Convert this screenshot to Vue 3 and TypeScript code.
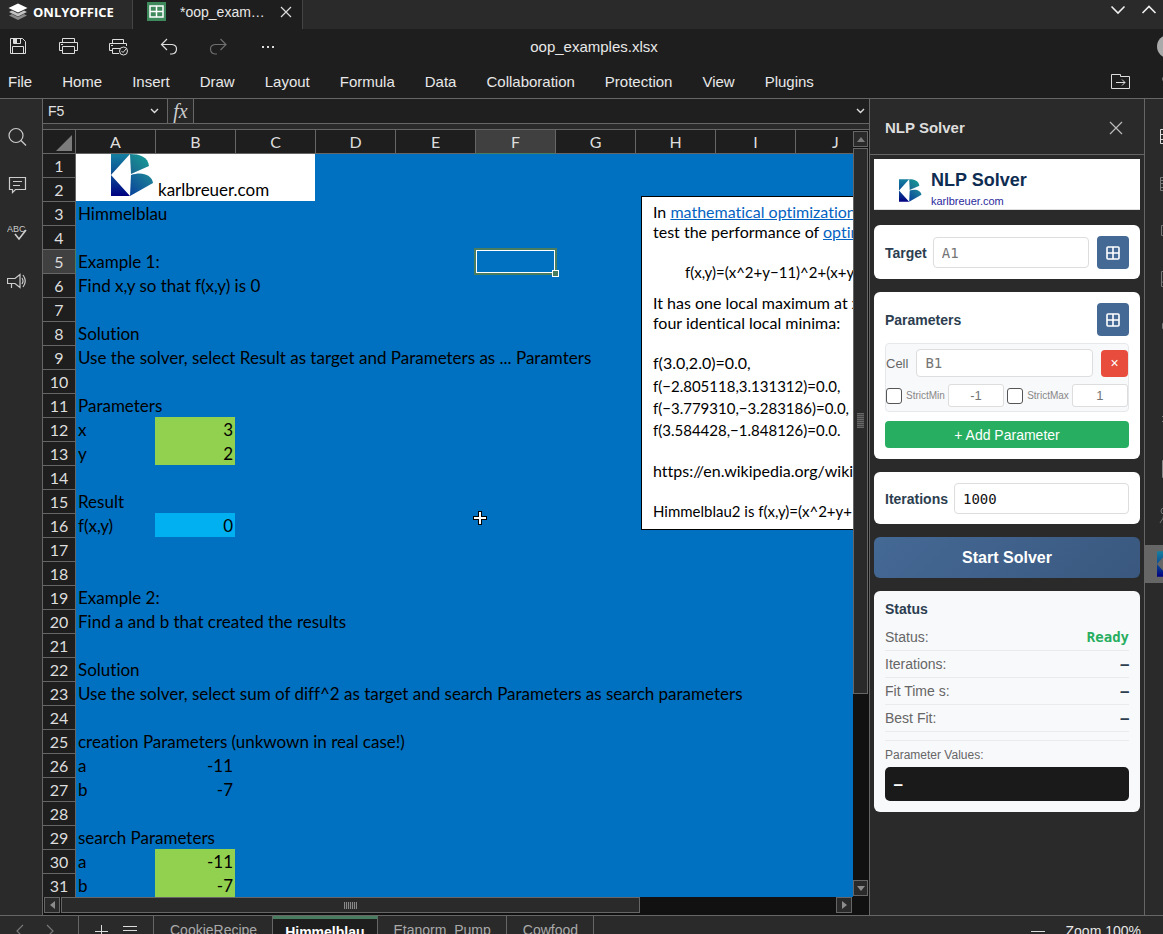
<script setup lang="ts">
import { ref } from 'vue'

interface Cell {
  text?: string
  num?: boolean
  fill?: 'green' | 'cyan' | 'white'
}

const menus = ['File', 'Home', 'Insert', 'Draw', 'Layout', 'Formula', 'Data', 'Collaboration', 'Protection', 'View', 'Plugins']
const columns = ['A', 'B', 'C', 'D', 'E', 'F', 'G', 'H', 'I', 'J']
const rows = Array.from({ length: 31 }, (_, i) => i + 1)
const activeColumn = 'F'
const activeRow = 5

const cells: Record<string, Cell> = {
  A1: { fill: 'white' }, B1: { fill: 'white' }, C1: { fill: 'white' },
  A2: { fill: 'white' }, B2: { text: 'karlbreuer.com', fill: 'white' }, C2: { fill: 'white' },
  A3: { text: 'Himmelblau' },
  A5: { text: 'Example 1:' },
  A6: { text: 'Find x,y so that f(x,y) is 0' },
  A8: { text: 'Solution' },
  A9: { text: 'Use the solver, select Result as target and Parameters as ... Paramters' },
  A11: { text: 'Parameters' },
  A12: { text: 'x' }, B12: { text: '3', num: true, fill: 'green' },
  A13: { text: 'y' }, B13: { text: '2', num: true, fill: 'green' },
  A15: { text: 'Result' },
  A16: { text: 'f(x,y)' }, B16: { text: '0', num: true, fill: 'cyan' },
  A19: { text: 'Example 2:' },
  A20: { text: 'Find a and b that created the results' },
  A22: { text: 'Solution' },
  A23: { text: 'Use the solver, select sum of diff^2 as target and search Parameters as search parameters' },
  A25: { text: 'creation Parameters (unkwown in real case!)' },
  A26: { text: 'a' }, B26: { text: '-11', num: true },
  A27: { text: 'b' }, B27: { text: '-7', num: true },
  A29: { text: 'search Parameters' },
  A30: { text: 'a' }, B30: { text: '-11', num: true, fill: 'green' },
  A31: { text: 'b' }, B31: { text: '-7', num: true, fill: 'green' },
}

function cellClass(column: string, row: number): string[] {
  const cell = cells[column + row]
  const list: string[] = []
  if (cell?.num) list.push('num')
  if (cell?.fill) list.push(cell.fill)
  return list
}

const sheets = ['CookieRecipe', 'Himmelblau', 'Etanorm_Pump', 'Cowfood']
const activeSheet = ref('Himmelblau')

const target = ref('')
const paramCell = ref('')
const strictMin = ref(false)
const strictMax = ref(false)
const minValue = ref('')
const maxValue = ref('')
const iterations = ref('1000')

const results = [
  { label: 'Status:', value: 'Ready', ready: true },
  { label: 'Iterations:', value: '–', ready: false },
  { label: 'Fit Time s:', value: '–', ready: false },
  { label: 'Best Fit:', value: '–', ready: false },
]
</script>

<template>
  <div class="app">
    <svg class="defs" width="0" height="0" aria-hidden="true">
      <defs>
        <linearGradient id="kbLeft" x1="0" y1="0" x2="0" y2="1">
          <stop offset="0" stop-color="#1580a0" />
          <stop offset="0.5" stop-color="#0b4c94" />
          <stop offset="1" stop-color="#000080" />
        </linearGradient>
        <linearGradient id="kbTop" x1="0" y1="1" x2="1" y2="0">
          <stop offset="0" stop-color="#1d6590" />
          <stop offset="1" stop-color="#12a096" />
        </linearGradient>
        <linearGradient id="kbBottom" x1="0" y1="1" x2="1" y2="0">
          <stop offset="0" stop-color="#08409a" />
          <stop offset="1" stop-color="#1f8a98" />
        </linearGradient>
        <symbol id="kb" viewBox="0 0 43 42">
          <path d="M0 0H19L0 21Z M0 21L19 42H0Z" fill="url(#kbLeft)" />
          <path d="M19 0C29 0 37 3 38 12L20 20Z" fill="url(#kbTop)" />
          <path d="M20 21C31 17 41 21 42 29L19 42Z" fill="url(#kbBottom)" />
        </symbol>
        <symbol id="grid" viewBox="0 0 14 14">
          <rect x="1" y="1" width="12" height="12" rx="1" fill="none" stroke="currentColor" stroke-width="1.6" />
          <path d="M7 1V13M1 7H13" stroke="currentColor" stroke-width="1.6" />
        </symbol>
      </defs>
    </svg>

    <header class="titlebar">
      <div class="brand">
        <svg width="20" height="18" viewBox="0 0 20 18">
          <path d="M1 12.5L10 17L19 12.5L16 11L10 14L4 11Z" fill="#8a8a8a" />
          <path d="M1 9L10 13.5L19 9L16 7.5L10 10.5L4 7.5Z" fill="#c4c4c4" />
          <path d="M10 0.500L19.500 5L10 9.500L0.500 5Z" fill="#fff" />
        </svg>
        <span>ONLYOFFICE</span>
      </div>
      <div class="doc-tab">
        <svg width="19" height="19" viewBox="0 0 19 19">
          <rect width="19" height="19" fill="#3f8a5c" />
          <rect x="3" y="4" width="13" height="11" fill="none" stroke="#fff" stroke-width="1.5" />
          <path d="M9.500 4V15M3 9.500H16" stroke="#fff" stroke-width="1.5" />
        </svg>
        <span>*oop_exam…</span>
        <button class="plain" aria-label="Close document">
          <svg width="12" height="12" viewBox="0 0 12 12"><path d="M1 1L11 11M11 1L1 11" stroke="#ddd" stroke-width="1.200" /></svg>
        </button>
      </div>
      <div class="window-buttons">
        <button class="plain" aria-label="Minimize"><svg width="16" height="10" viewBox="0 0 16 10"><path d="M1.500 1.500L8 8L14.500 1.500" fill="none" stroke="#eee" stroke-width="1.600" /></svg></button>
        <button class="plain" aria-label="Maximize"><svg width="16" height="10" viewBox="0 0 16 10"><path d="M1.500 8L8 1.500L14.500 8" fill="none" stroke="#eee" stroke-width="1.600" /></svg></button>
      </div>
    </header>

    <div class="quickbar">
      <div class="quick-actions">
        <button class="plain" aria-label="Save">
          <svg width="20" height="20" viewBox="0 0 20 20" fill="none" stroke="#ddd">
            <path d="M2.500 1.500H14.500L17.500 4.500V16.500H2.500Z M4.500 16.500V9.500H15.500V16.500" />
            <path d="M5.500 1.500V6.500H12.500V1.500" /><path d="M6 2H9V6H6Z" fill="#ddd" stroke="none" />
          </svg>
        </button>
        <button class="plain" aria-label="Print">
          <svg width="20" height="20" viewBox="0 0 20 20" fill="none" stroke="#ddd">
            <path d="M4.500 5.500V1.500H16.500V5.500M4.500 13.500H1.500V5.500H19.500V13.500H16.500M4.500 9.500H16.500V16.500H4.500Z M3 7.500H5" />
          </svg>
        </button>
        <button class="plain" aria-label="Quick print">
          <svg width="20" height="20" viewBox="0 0 20 20" fill="none" stroke="#ddd">
            <path d="M4.500 6.500V2.500H15.500V6.500M4.500 13.500H1.500V6.500H18.500V9M11 16.500H4.500V11.500H12M3 8.500H5" />
            <circle cx="15.500" cy="14" r="4" /><path d="M13.500 14L15 15.500L18 12" />
          </svg>
        </button>
        <button class="plain" aria-label="Undo">
          <svg width="20" height="20" viewBox="0 0 20 20" fill="none" stroke="#ddd" stroke-width="1.200">
            <path d="M9 2L3.500 7.500L9 13M3.500 7.500H14Q18.500 8 18.500 12Q18.500 16.500 14 17H12" />
          </svg>
        </button>
        <button class="plain" aria-label="Redo">
          <svg width="20" height="20" viewBox="0 0 20 20" fill="none" stroke="#6e6e6e" stroke-width="1.200">
            <path d="M12.500 2L18 7.500L12.500 13M18 7.500H7Q2.500 8 2.500 12Q2.500 16.500 7 17H9" />
          </svg>
        </button>
        <button class="plain" aria-label="More">
          <svg width="20" height="20" viewBox="0 0 20 20" fill="#ddd"><path d="M4 9H6V11H4ZM9 9H11V11H9ZM14 9H16V11H14Z" /></svg>
        </button>
      </div>
      <div class="doc-title">oop_examples.xlsx</div>
      <div class="avatar"></div>
    </div>

    <nav class="menubar">
      <button v-for="m in menus" :key="m" class="plain">{{ m }}</button>
      <div class="menu-tools">
        <button class="plain" aria-label="Open file location">
          <svg width="20" height="16" viewBox="0 0 20 16" fill="none" stroke="#ddd">
            <path d="M1.500 1.500H10.500V3.500H19.500V15.500H1.500Z M6 9.500H15M12 6.500L15 9.500L12 12.500" />
          </svg>
        </button>
        <button class="plain" aria-label="Search">
          <svg width="20" height="20" viewBox="0 0 20 20" fill="none" stroke="#ddd"><circle cx="8" cy="8" r="6" /><path d="M12 12L18 18" /></svg>
        </button>
      </div>
    </nav>

    <main class="workspace">
      <aside class="left-bar">
        <button class="plain" aria-label="Search">
          <svg width="20" height="20" viewBox="0 0 20 20" fill="none" stroke="#ccc" stroke-width="1.200"><circle cx="9" cy="8.500" r="7" /><path d="M14 13.500L19 18.500" /></svg>
        </button>
        <button class="plain" aria-label="Comments">
          <svg width="20" height="20" viewBox="0 0 20 20" fill="none" stroke="#ccc" stroke-width="1.200">
            <path d="M2.500 2.500H18.500V14.500H8.500L5.500 17.500V14.500H2.500Z M6 6.500H15M6 10.500H13" />
          </svg>
        </button>
        <button class="plain" aria-label="Spell check">
          <svg width="20" height="20" viewBox="0 0 20 20">
            <text class="abc" x="0" y="9">ABC</text>
            <path d="M8 11L12 16L19 7" fill="none" stroke="#ccc" stroke-width="1.600" />
          </svg>
        </button>
        <button class="plain" aria-label="Feedback">
          <svg width="20" height="20" viewBox="0 0 20 20" fill="none" stroke="#ccc" stroke-width="1.200">
            <path d="M13 3.500V16.500L8 12.500H0.500V7.500H8Z M4.500 12.500V17M15 7Q17 10 15 13M16 4Q20.500 10 16 16" />
          </svg>
        </button>
      </aside>

      <section class="editor">
        <div class="formula-bar">
          <div class="name-box">
            <input aria-label="Cell name" value="F5" />
            <svg width="9" height="6" viewBox="0 0 9 6"><path d="M1 1L4.500 4.500L8 1" fill="none" stroke="#ddd" stroke-width="1.400" /></svg>
          </div>
          <button class="plain fx">fx</button>
          <input class="formula" aria-label="Formula" />
          <button class="plain expand" aria-label="Expand formula bar">
            <svg width="9" height="6" viewBox="0 0 9 6"><path d="M1 1L4.500 4.500L8 1" fill="none" stroke="#ddd" stroke-width="1.400" /></svg>
          </button>
        </div>

        <div class="sheet-area">
          <div class="sheet">
            <table>
              <thead>
                <tr>
                  <th class="corner"><svg width="16" height="16" viewBox="0 0 16 16"><path d="M16 0V16H0Z" fill="#7c7c7c" /></svg></th>
                  <th v-for="c in columns" :key="c" scope="col" :class="{ active: c === activeColumn }">{{ c }}</th>
                </tr>
              </thead>
              <tbody>
                <tr v-for="r in rows" :key="r">
                  <th scope="row" :class="{ active: r === activeRow }">{{ r }}</th>
                  <td v-for="c in columns" :key="c" :class="cellClass(c, r)">
                    <div v-if="cells[c + r]?.text" class="content">{{ cells[c + r]?.text }}</div>
                    <div v-if="c === activeColumn && r === activeRow" class="selection"><i></i></div>
                  </td>
                </tr>
              </tbody>
            </table>

            <svg class="sheet-logo" width="43" height="42"><use href="#kb" /></svg>

            <div class="note">
              <p>In <a href="#">mathematical optimization</a></p>
              <p>test the performance of <a href="#">optim</a></p>
              <p class="formula-line">f(x,y)=(x^2+y−11)^2+(x+y</p>
              <p>It has one local maximum at x</p>
              <p>four identical local minima:</p>
              <p class="spaced">f(3.0,2.0)=0.0,</p>
              <div class="minima">
                <p>f(−2.805118,3.131312)=0.0,</p>
                <p>f(−3.779310,−3.283186)=0.0,</p>
                <p>f(3.584428,−1.848126)=0.0.</p>
              </div>
              <p class="spaced">https://en.wikipedia.org/wiki/</p>
              <p class="spaced small">Himmelblau2 is f(x,y)=(x^2+y+</p>
            </div>

            <svg class="pointer" width="14" height="14" viewBox="0 0 14 14">
              <path d="M5 0H9V5H14V9H9V14H5V9H0V5H5Z" fill="#000" /><path d="M6 1H8V6H13V8H8V13H6V8H1V6H6Z" fill="#fff" />
            </svg>
          </div>

          <div class="vscroll">
            <button class="plain step" aria-label="Scroll up"><svg width="8" height="5" viewBox="0 0 8 5"><path d="M4 0L8 5H0Z" fill="#7c7c7c" /></svg></button>
            <div class="thumb"><span></span></div>
            <div class="rest"></div>
            <button class="plain step" aria-label="Scroll down"><svg width="8" height="5" viewBox="0 0 8 5"><path d="M0 0H8L4 5Z" fill="#8c8c8c" /></svg></button>
          </div>
        </div>

        <div class="hscroll">
          <button class="plain step" aria-label="Scroll left"><svg width="5" height="8" viewBox="0 0 5 8"><path d="M5 0V8L0 4Z" fill="#8c8c8c" /></svg></button>
          <div class="thumb"><span></span></div>
          <div class="rest"></div>
          <button class="plain step" aria-label="Scroll right"><svg width="5" height="8" viewBox="0 0 5 8"><path d="M0 0V8L5 4Z" fill="#8c8c8c" /></svg></button>
        </div>
      </section>

      <aside class="panel">
        <div class="panel-head">
          <h2>NLP Solver</h2>
          <button class="plain" aria-label="Close panel">
            <svg width="14" height="14" viewBox="0 0 14 14"><path d="M1 1L13 13M13 1L1 13" stroke="#bbb" stroke-width="1.200" /></svg>
          </button>
        </div>

        <div class="panel-body">
          <div class="product">
            <svg width="23" height="23"><use href="#kb" /></svg>
            <div>
              <h1>NLP Solver</h1>
              <a href="#">karlbreuer.com</a>
            </div>
          </div>

          <div class="card line">
            <label for="target">Target</label>
            <input id="target" v-model="target" class="field" placeholder="A1" />
            <button class="pick" aria-label="Pick target cell"><svg width="14" height="14"><use href="#grid" /></svg></button>
          </div>

          <div class="card">
            <div class="card-head">
              <h3>Parameters</h3>
              <button class="pick" aria-label="Pick parameter cells"><svg width="14" height="14"><use href="#grid" /></svg></button>
            </div>
            <div class="param">
              <div class="param-cell">
                <label for="pcell">Cell</label>
                <input id="pcell" v-model="paramCell" class="field" placeholder="B1" />
                <button class="remove" aria-label="Remove parameter">×</button>
              </div>
              <div class="param-limits">
                <label><input v-model="strictMin" type="checkbox" />StrictMin</label>
                <input v-model="minValue" class="limit" placeholder="-1" aria-label="Minimum" />
                <label><input v-model="strictMax" type="checkbox" />StrictMax</label>
                <input v-model="maxValue" class="limit" placeholder="1" aria-label="Maximum" />
              </div>
            </div>
            <button class="add">+ Add Parameter</button>
          </div>

          <div class="card line">
            <label for="iter">Iterations</label>
            <input id="iter" v-model="iterations" class="field" />
          </div>

          <button class="start">Start Solver</button>

          <div class="card status">
            <h3>Status</h3>
            <dl>
              <div v-for="r in results" :key="r.label">
                <dt>{{ r.label }}</dt>
                <dd :class="{ ready: r.ready }">{{ r.value }}</dd>
              </div>
            </dl>
            <div class="values">
              <div>Parameter Values:</div>
              <output>–</output>
            </div>
          </div>
        </div>
      </aside>

      <nav class="right-bar">
        <div class="tools">
          <button class="plain" aria-label="Cell settings"><svg width="20" height="20" viewBox="0 0 20 20" fill="none" stroke="#ddd"><path d="M2.500 3.500H17.500V17.500H2.500ZM2.500 8.500H17.500M2.500 13.500H17.500" /></svg></button>
          <button class="plain" aria-label="Table settings"><svg width="20" height="20" viewBox="0 0 20 20" fill="none" stroke="#777"><path d="M2.500 3.500H17.500V16.500H2.500ZM2.500 6.500H17.500M2.500 9.500H17.500M2.500 13.500H17.500" /></svg></button>
          <button class="plain" aria-label="Shape settings"><svg width="20" height="20" viewBox="0 0 20 20" fill="none" stroke="#777"><path d="M3.500 4.500H12.500V14.500H3.500Z" /></svg></button>
          <button class="plain" aria-label="Image settings"><svg width="20" height="20" viewBox="0 0 20 20" fill="none" stroke="#777"><path d="M3.500 2.500H17.500V17.500H3.500ZM3.500 14L8 10L14 16" /></svg></button>
          <button class="plain" aria-label="Chart settings"><svg width="20" height="20" viewBox="0 0 20 20" fill="none" stroke="#777"><path d="M4.500 7.500H7.500V12.500H4.500Z" /></svg></button>
          <button class="plain" aria-label="Text settings"><svg width="20" height="20" viewBox="0 0 20 20" fill="none" stroke="#777"><path d="M5.500 4.500H16.500M10.500 4.500V17" /></svg></button>
          <button class="plain" aria-label="Pivot settings"><svg width="20" height="20" viewBox="0 0 20 20" fill="none" stroke="#777"><path d="M4 5.500H17M4 10.500H17" /></svg></button>
          <button class="plain" aria-label="Slicer settings"><svg width="20" height="20" viewBox="0 0 20 20" fill="none" stroke="#888"><path d="M4.500 1.500H17.500V18.500H4.500Z" /></svg></button>
          <button class="plain" aria-label="Signature settings"><svg width="20" height="20" viewBox="0 0 20 20" fill="none" stroke="#777"><circle cx="6" cy="5" r="3" /><path d="M2 17Q6 12 6 8M5 12L10 18" /></svg></button>
          <button class="plain current" aria-label="NLP Solver"><svg width="26" height="26"><use href="#kb" /></svg></button>
        </div>
      </nav>
    </main>

    <footer class="sheet-bar">
      <div class="nav-arrows">
        <button class="plain" aria-label="Previous sheets"><svg width="8" height="14" viewBox="0 0 8 14"><path d="M7 1L1 7L7 13" fill="none" stroke="#777" stroke-width="1.200" /></svg></button>
        <button class="plain" aria-label="Next sheets"><svg width="8" height="14" viewBox="0 0 8 14"><path d="M1 1L7 7L1 13" fill="none" stroke="#777" stroke-width="1.200" /></svg></button>
      </div>
      <div class="sheet-tools">
        <button class="plain" aria-label="Add sheet"><svg width="14" height="14" viewBox="0 0 14 14"><path d="M7.500 1V14M1 7.500H14" stroke="#ddd" /></svg></button>
        <button class="plain" aria-label="List sheets"><svg width="14" height="14" viewBox="0 0 14 14"><path d="M0 2.500H14M0 6.500H14M0 10.500H14" stroke="#ddd" /></svg></button>
      </div>
      <button v-for="s in sheets" :key="s" class="plain sheet-tab" :class="{ selected: s === activeSheet }" @click="activeSheet = s">{{ s }}</button>
      <div class="zoom">
        <button class="plain" aria-label="Zoom out"><svg width="14" height="14" viewBox="0 0 14 14"><path d="M0 7.500H14" stroke="#ddd" /></svg></button>
        <span>Zoom 100%</span>
      </div>
    </footer>
  </div>
</template>

<style>
body {
  margin: 0;
  background: #2a2a2a;
}
</style>

<style scoped>
.app {
  display: flex;
  flex-direction: column;
  height: 100vh;
  overflow: hidden;
  background: #2a2a2a;
  color: #e8e8e8;
  font-family: "Liberation Sans", Arial, sans-serif;
  font-size: 14px;
}
.app *, .app *::before {
  box-sizing: border-box;
}
svg {
  display: block;
  flex: none;
}
.defs {
  position: absolute;
}
input, button {
  font: inherit;
  min-width: 0;
}
h1, h2, h3, p, dl, dd {
  margin: 0;
}
.plain {
  padding: 0;
  border: 0;
  background: none;
  color: inherit;
}

/* Title bar */
.titlebar {
  display: flex;
  flex: none;
  height: 29px;
}
.brand {
  display: flex;
  align-items: center;
  gap: 5px;
  width: 133px;
  padding: 0 0 6px 8px;
  border-right: 1px solid #444;
  font-family: "Open Sans", sans-serif;
  font-size: 13px;
  font-weight: 700;
  color: #fff;
}
.doc-tab {
  display: flex;
  align-items: center;
  width: 170px;
  padding: 0 10px 6px 14px;
  border-right: 1px solid #444;
  background: #1e1e1e;
}
.doc-tab span {
  flex: 1;
  margin-left: 14px;
}
.window-buttons {
  display: flex;
  align-items: center;
  gap: 15px;
  margin-left: auto;
  padding: 0 6px 10px 0;
}

/* Quick actions and menu */
.quickbar {
  display: grid;
  grid-template-columns: 1fr auto 1fr;
  align-items: center;
  flex: none;
  height: 35px;
  margin-right: -25px;
  padding: 0 8px;
  background: #1e1e1e;
}
.quick-actions {
  display: flex;
  gap: 30px;
}
.doc-title {
  font-size: 15px;
}
.avatar {
  justify-self: end;
  width: 23px;
  height: 23px;
  border-radius: 50%;
  background: #aaa;
}
.menubar {
  display: flex;
  align-items: center;
  gap: 30px;
  flex: none;
  height: 35px;
  margin-right: -25px;
  padding: 0 7px 0 8px;
  border-bottom: 1px solid #666;
  background: #1e1e1e;
  font-size: 15px;
}
.menu-tools {
  display: flex;
  align-items: center;
  gap: 31px;
  margin-left: auto;
}

/* Workspace */
.workspace {
  display: flex;
  flex: 1;
  min-height: 0;
}
.left-bar {
  display: flex;
  flex-direction: column;
  align-items: center;
  gap: 28px;
  flex: none;
  width: 43px;
  padding: 28px 8px 0 0;
  border-right: 1px solid #666;
}
.abc {
  font-size: 9px;
  fill: #ccc;
}
.editor {
  display: flex;
  flex: 1;
  flex-direction: column;
  min-width: 0;
}
.formula-bar {
  display: flex;
  flex: none;
  height: 25px;
  margin-bottom: 5px;
  border-bottom: 1px solid #666;
  background: #1f1f1f;
}
.name-box {
  display: flex;
  align-items: center;
  width: 125px;
  padding: 0 8px 0 5px;
  border-right: 1px solid #666;
}
.name-box input, .formula {
  flex: 1;
  padding: 0;
  border: 0;
  outline: 0;
  background: none;
  color: #e0e0e0;
}
.fx {
  width: 26px;
  border-right: 1px solid #666;
  background: #262626;
  color: #ccc;
  font-family: "Liberation Serif", serif;
  font-size: 20px;
  font-style: italic;
  line-height: 20px;
}
.expand {
  padding: 0 4px;
}

.sheet-area {
  display: flex;
  flex: 1;
  min-height: 0;
  border-top: 1px solid #666;
}
.sheet {
  position: relative;
  flex: 1;
  min-width: 0;
  overflow: hidden;
  background: #0070c0;
  color: #000;
  font-family: Lato, sans-serif;
  font-size: 17px;
  font-variant-ligatures: none;
}
table {
  width: 832px;
  table-layout: fixed;
  border-spacing: 0;
}
th, td {
  height: 24px;
  padding: 0;
  line-height: 23px;
}
th {
  border-top: 1px solid #666;
  border-right: 1px solid #666;
  background: #1e1e1e;
  color: #ddd;
  font-size: 16px;
  font-weight: 400;
  text-align: center;
}
thead th {
  border-width: 0 0 1px 1px;
  border-style: solid;
  border-color: #666;
}
thead th.corner {
  width: 33px;
  border-width: 0 1px 1px 0;
}
thead th:nth-child(2) {
  width: 79px;
  border-left-width: 0;
}
tbody tr:first-child > * {
  height: 23px;
  border-top-width: 0;
}
.corner svg {
  margin: 2px 0 0 13px;
}
th.active {
  background: #404040;
}
thead th.active {
  border-bottom-color: #4a7c5f;
}
tbody th.active {
  border-right-color: #4a7c5f;
}
td {
  position: relative;
  white-space: nowrap;
}
td.white {
  background: #fff;
}
td.green {
  background: #92d050;
}
td.cyan {
  background: #00b0f0;
}
.content {
  position: relative;
  z-index: 1;
  width: 0;
  height: 23px;
  padding-left: 2px;
}
td.white .content {
  padding-left: 3px;
}
.num .content {
  width: auto;
  padding: 0 2px 0 0;
  text-align: right;
}
.selection {
  position: absolute;
  inset: -1px -2px -2px -1px;
  border: 2px solid #4a7c5f;
  box-shadow: inset 0 0 0 1px #fff;
}
.selection i {
  position: absolute;
  right: -4px;
  bottom: -4px;
  width: 7px;
  height: 7px;
  border: 1px solid #fff;
  background: #4a7c5f;
}
.sheet-logo {
  position: absolute;
  left: 68px;
  top: 24px;
}
.note {
  position: absolute;
  left: 598px;
  top: 66px;
  width: 420px;
  padding: 5px 11px 8px;
  border: 1px solid #000;
  background: #fff;
  font-size: 16px;
  line-height: 20px;
  white-space: nowrap;
}
.note a {
  color: #0563c1;
}
.note .formula-line {
  margin: 20px 0 11px;
  padding-left: 32px;
  font-size: 15px;
}
.note .spaced {
  margin-top: 20px;
}
.note .small {
  font-size: 15px;
}
.minima {
  padding-top: 2px;
  font-size: 15px;
  line-height: 22px;
}
.pointer {
  position: absolute;
  left: 430px;
  top: 381px;
}

/* Scroll bars */
.vscroll {
  display: flex;
  flex-direction: column;
  gap: 1px;
  flex: none;
  width: 16px;
  padding: 1px 1px 1px 0;
  background: #111;
}
.step {
  display: grid;
  place-items: center;
  flex: none;
  width: 15px;
  height: 16px;
  border: 1px solid #666;
  background: #2a2a2a;
}
.thumb {
  display: grid;
  place-items: center;
  border: 1px solid #666;
  background: #2a2a2a;
}
.vscroll .thumb {
  flex: 545;
}
.vscroll .rest {
  flex: 185;
}
.vscroll .thumb span {
  width: 7px;
  height: 15px;
  background: repeating-linear-gradient(#666 0 1px, #444 1px 2px);
}
.hscroll {
  display: flex;
  gap: 1px;
  flex: none;
  height: 18px;
  padding: 0 17px 2px 1px;
  background: #111;
}
.hscroll .step {
  width: 16px;
}
.hscroll .thumb {
  flex: 578;
  height: 16px;
}
.hscroll .rest {
  flex: 195;
}
.hscroll .thumb span {
  width: 13px;
  height: 7px;
  background: repeating-linear-gradient(90deg, #888 0 1px, #333 1px 2px);
}

/* Solver panel */
.panel {
  flex: none;
  width: 275px;
  border-left: 1px solid #666;
}
.panel-head {
  display: flex;
  align-items: center;
  justify-content: space-between;
  height: 56px;
  padding: 2px 21px 0 15px;
  border-bottom: 1px solid #666;
}
.panel-head h2 {
  font-size: 15px;
  color: #ddd;
}
.panel-body {
  display: flex;
  flex-direction: column;
  gap: 13px;
  padding: 4px;
}
.product {
  display: flex;
  align-items: center;
  gap: 9px;
  height: 51px;
  margin-bottom: 2px;
  padding: 12px 25px 0;
  border-bottom: 1px solid #ddd;
  background: #fff;
}
.product h1 {
  color: #0f2d52;
  font-size: 18px;
  line-height: 22px;
}
.product a {
  display: block;
  color: #2a2a9c;
  font-size: 11px;
  line-height: 20px;
  text-decoration: none;
}
.card {
  padding: 11px;
  border-radius: 6px;
  background: #fff;
  color: #2c3e50;
}
.line {
  display: flex;
  align-items: center;
  gap: 8px;
  padding-bottom: 10px;
}
.line label {
  margin-right: -2px;
  font-weight: 700;
}
.field {
  flex: 1;
  height: 31px;
  padding: 0 8px;
  border: 1px solid #ddd;
  border-radius: 4px;
  outline: 0;
  background: #fff;
  color: #111;
  font-family: "DejaVu Sans Mono", monospace;
}
.field::placeholder, .limit::placeholder {
  color: #757575;
}
.pick {
  display: grid;
  place-items: center;
  flex: none;
  width: 32px;
  height: 33px;
  padding: 0;
  border: 0;
  border-radius: 4px;
  background: #446995;
  color: #fff;
}
.card h3 {
  font-size: 14px;
}
.card-head {
  display: flex;
  align-items: center;
  justify-content: space-between;
}
.param {
  margin: 7px 0 9px;
  padding: 5px 0 4px;
  border: 1px solid #e6e9ec;
  border-radius: 4px;
  background: #f8f9fb;
}
.param-cell {
  display: flex;
  align-items: center;
  gap: 8px;
}
.param-cell label {
  color: #666;
  font-size: 13px;
}
.param-cell .field {
  height: 28px;
}
.remove {
  flex: none;
  width: 27px;
  height: 27px;
  padding: 0;
  border: 0;
  border-radius: 4px;
  background: #e74c3c;
  color: #fff;
}
.param-limits {
  display: flex;
  align-items: center;
  gap: 3px;
  margin-top: 7px;
}
.param-limits label {
  display: flex;
  align-items: center;
  gap: 4px;
  color: #888;
  font-size: 10px;
}
.param-limits [type="checkbox"] {
  appearance: none;
  width: 16px;
  height: 16px;
  margin: 0;
  border: 1px solid #555;
  border-radius: 3px;
  background: #fff;
}
.param-limits [type="checkbox"]:checked {
  background: #446995;
}
.limit {
  flex: 1;
  height: 23px;
  padding: 0;
  border: 1px solid #ddd;
  border-radius: 3px;
  background: #fff;
  font-size: 13px;
  text-align: center;
}
.add {
  width: 100%;
  height: 27px;
  padding: 0;
  border: 0;
  border-radius: 4px;
  background: #27ae60;
  color: #fff;
}
.start {
  height: 41px;
  padding: 0;
  border: 0;
  border-radius: 6px;
  background: linear-gradient(135deg, #446995, #3a587f);
  color: #fff;
  font-size: 16px;
  font-weight: 700;
}
.status {
  background: #f8f9fb;
}
.status h3 {
  margin-bottom: 8px;
  line-height: 14px;
}
dl div {
  display: flex;
  align-items: center;
  justify-content: space-between;
  height: 27px;
  border-bottom: 1px solid #e9ecef;
}
dt {
  color: #666;
}
dd {
  font-family: "DejaVu Sans Mono", monospace;
  font-weight: 700;
}
dd.ready {
  color: #27ae60;
}
.values {
  margin-top: 8px;
  padding-top: 6px;
  border-top: 1px solid #e9ecef;
  color: #666;
  font-size: 12px;
  line-height: 16px;
}
output {
  display: block;
  height: 34px;
  margin-top: 4px;
  padding: 0 9px;
  border-radius: 5px;
  background: #1a1a1a;
  color: #fff;
  font-family: "DejaVu Sans Mono", monospace;
  font-size: 14px;
  font-weight: 700;
  line-height: 34px;
}

.right-bar {
  flex: none;
  width: 19px;
  overflow: hidden;
  border-left: 1px solid #666;
}
.tools {
  display: flex;
  flex-direction: column;
  justify-content: space-between;
  width: 44px;
  height: 484px;
  padding-top: 18px;
}
.tools button {
  height: 38px;
  padding-left: 13px;
}
.tools .current {
  padding-left: 12px;
  background: #666;
}

/* Sheet tabs */
.sheet-bar {
  display: flex;
  flex: none;
  height: 19px;
  border-top: 1px solid #666;
  line-height: 28px;
}
.nav-arrows, .sheet-tools {
  display: flex;
  align-items: center;
  height: 30px;
  border-right: 1px solid #666;
}
.nav-arrows {
  gap: 22px;
  width: 79px;
  padding-left: 16px;
}
.sheet-tools {
  gap: 15px;
  width: 75px;
  padding-left: 15px;
}
.sheet-tab {
  height: 30px;
  padding: 0 15px 2px 16px;
  border-right: 1px solid #666;
  color: #aaa;
}
.sheet-tab.selected {
  padding: 0 12px 2px;
  border-top: 3px solid #4a7c5f;
  background: #1e1e1e;
  color: #fff;
  font-weight: 700;
  line-height: 22px;
}
.zoom {
  display: flex;
  align-items: center;
  gap: 21px;
  height: 30px;
  margin-left: auto;
  padding-right: 22px;
}
</style>
